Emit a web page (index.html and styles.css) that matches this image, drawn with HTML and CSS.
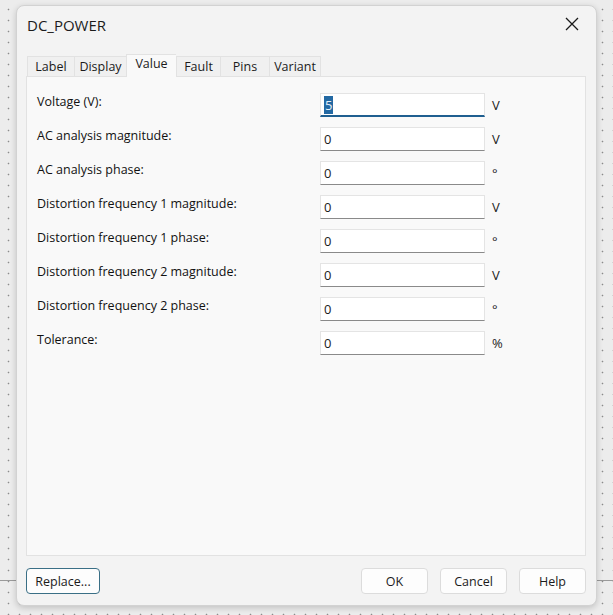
FILE: index.html
```html
<!DOCTYPE html>
<html lang="en">
<head>
    <meta charset="UTF-8">
    <title>DC_POWER</title>
    <link rel="stylesheet" href="styles.css">
</head>
<body>
    <div class="dialog">
        <div class="titlebar">
            <span class="title">DC_POWER</span>
            <svg class="close" width="14" height="14" viewBox="0 0 14 14">
                <path d="M1 1 L13 13 M13 1 L1 13" stroke="#1a1a1a" stroke-width="1.3" fill="none"/>
            </svg>
        </div>

        <div class="tabs">
            <div class="tab tab-label">Label</div>
            <div class="tab tab-display">Display</div>
            <div class="tab tab-value active">Value</div>
            <div class="tab tab-fault">Fault</div>
            <div class="tab tab-pins">Pins</div>
            <div class="tab tab-variant">Variant</div>
        </div>

        <div class="panel">
            <div class="row">
                <label>Voltage (V):</label>
                <div class="field focused"><span class="sel">5</span></div>
                <span class="unit">V</span>
            </div>
            <div class="row">
                <label>AC analysis magnitude:</label>
                <div class="field">0</div>
                <span class="unit">V</span>
            </div>
            <div class="row">
                <label>AC analysis phase:</label>
                <div class="field">0</div>
                <span class="unit">°</span>
            </div>
            <div class="row">
                <label>Distortion frequency 1 magnitude:</label>
                <div class="field">0</div>
                <span class="unit">V</span>
            </div>
            <div class="row">
                <label>Distortion frequency 1 phase:</label>
                <div class="field">0</div>
                <span class="unit">°</span>
            </div>
            <div class="row">
                <label>Distortion frequency 2 magnitude:</label>
                <div class="field">0</div>
                <span class="unit">V</span>
            </div>
            <div class="row">
                <label>Distortion frequency 2 phase:</label>
                <div class="field">0</div>
                <span class="unit">°</span>
            </div>
            <div class="row">
                <label>Tolerance:</label>
                <div class="field">0</div>
                <span class="unit">%</span>
            </div>
        </div>

        <div class="footer">
            <button class="btn btn-replace">Replace...</button>
            <div class="spacer"></div>
            <button class="btn">OK</button>
            <button class="btn">Cancel</button>
            <button class="btn">Help</button>
        </div>
    </div>
</body>
</html>
```

FILE: styles.css
```css
html, body {
    height: 100%;
}
body {
    margin: 0;
    padding: 5px 0 0 16px;
    box-sizing: border-box;
    font-family: "Open Sans", "Noto Sans", sans-serif;
    font-size: 12.5px;
    color: #1b1b1b;
    background-color: #ececec;
    background-image:
        linear-gradient(#9a9a9a, #9a9a9a),
        radial-gradient(circle, #8c8c8c 0.7px, transparent 1.1px);
    background-size: 100% 1px, 11px 11px;
    background-position: 0 580px, 3px 4px;
    background-repeat: no-repeat, repeat;
}
.dialog {
    width: 581px;
    height: 601px;
    box-sizing: border-box;
    background: #f3f3f3;
    border: 1px solid #d2d2d2;
    border-radius: 8px;
    box-shadow: 0 2px 6px rgba(0, 0, 0, 0.18);
    padding: 0 10px 0 9px;
    display: flex;
    flex-direction: column;
}
.titlebar {
    height: 48px;
    display: flex;
    align-items: center;
    justify-content: space-between;
    padding: 0 7px 0 1px;
}
.title {
    font-size: 15px;
    margin-top: -10px;
}
.close {
    margin-top: -12px;
}
.tabs {
    display: flex;
    align-items: flex-end;
    height: 22px;
    padding-left: 1px;
}
.tab {
    height: 20px;
    line-height: 20px;
    box-sizing: border-box;
    border: 1px solid #e2e2e2;
    border-bottom: none;
    border-right: none;
    background: #f0f0f0;
    text-align: center;
}
.tab-label { width: 47px; }
.tab-display { width: 52px; }
.tab-value { width: 50px; }
.tab-fault { width: 44px; }
.tab-pins { width: 49px; }
.tab-variant { width: 52px; border-right: 1px solid #e2e2e2; }
.tab.active {
    height: 23px;
    line-height: 18px;
    background: #f9f9f9;
    position: relative;
    z-index: 1;
    margin-bottom: -1px;
}
.panel {
    height: 480px;
    box-sizing: border-box;
    background: #f9f9f9;
    border: 1px solid #e2e2e2;
    padding: 16px 10px 0 10px;
    display: flex;
    flex-direction: column;
    gap: 10px;
}
.row {
    display: flex;
    align-items: flex-start;
    height: 24px;
}
.row label {
    width: 283px;
    line-height: 18px;
    color: #111;
}
.field {
    width: 165px;
    height: 24px;
    box-sizing: border-box;
    background: #ffffff;
    border: 1px solid #e4e4e4;
    border-bottom: 1px solid #8a8a8a;
    padding: 0 3px;
    line-height: 22px;
    font-size: 13px;
}
.field.focused {
    border-bottom: 2px solid #1f5f90;
}
.sel {
    background: #2369a3;
    color: #e6f0fa;
    padding: 0 1px;
}
.unit {
    margin-left: 7px;
    line-height: 24px;
    font-size: 13px;
}
.footer {
    display: flex;
    align-items: center;
    gap: 12px;
    padding-top: 12px;
}
.spacer {
    flex: 1;
}
.btn {
    height: 26px;
    width: 67px;
    box-sizing: border-box;
    font-family: inherit;
    font-size: 12.5px;
    color: #1b1b1b;
    background: #fdfdfd;
    border: 1px solid #dcdcdc;
    border-radius: 4px;
    padding: 0;
}
.btn-replace {
    width: 74px;
    border: 1px solid #3a6f86;
}
```
